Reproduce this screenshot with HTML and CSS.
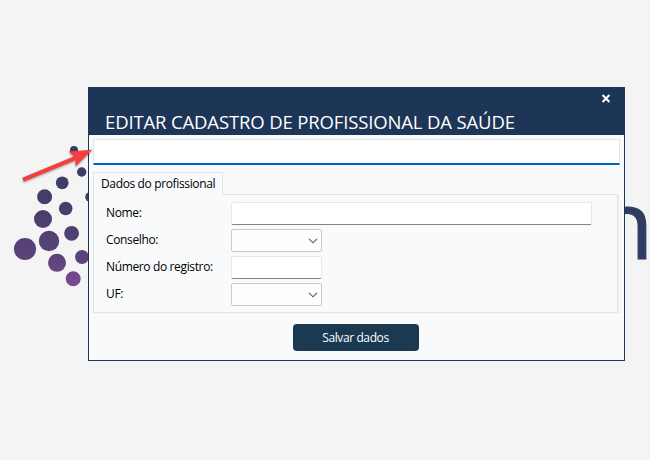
FILE: index.html
```html
<!DOCTYPE html>
<html lang="pt-BR">
<head>
<meta charset="utf-8">
<title>Editar cadastro</title>
<link rel="stylesheet" href="styles.css">
</head>
<body>
<svg class="backdrop" width="650" height="460" viewBox="0 0 650 460" aria-hidden="true">
  <defs>
    <linearGradient id="dots" gradientUnits="userSpaceOnUse" x1="0" y1="145" x2="0" y2="287">
      <stop offset="0" stop-color="#323f63"/>
      <stop offset=".45" stop-color="#463e6b"/>
      <stop offset=".8" stop-color="#5c437a"/>
      <stop offset="1" stop-color="#7c4b92"/>
    </linearGradient>
  </defs>
  <g fill="url(#dots)">
    <circle cx="74" cy="150" r="4"/>
    <circle cx="81.7" cy="172" r="4.7"/>
    <circle cx="62.2" cy="182.8" r="6.4"/>
    <circle cx="44.6" cy="196.7" r="7.5"/>
    <circle cx="90" cy="197" r="4.8"/>
    <circle cx="65.7" cy="208.5" r="6.8"/>
    <circle cx="43" cy="219" r="9"/>
    <circle cx="71.6" cy="233.3" r="7.4"/>
    <circle cx="49" cy="241" r="10.2"/>
    <circle cx="25" cy="249" r="11.1"/>
    <circle cx="82" cy="257" r="6.9"/>
    <circle cx="57" cy="262.8" r="9"/>
    <circle cx="73.2" cy="278.7" r="7.5"/>
  </g>
  <text class="wordmark" x="595.2" y="258.5">n</text>
</svg>

<main class="dialog">
  <header class="titlebar">
    <svg class="close" width="10" height="10" viewBox="0 0 10 10"><path d="M1.2 1.2L8.8 8.8M8.8 1.2L1.2 8.8"/></svg>
    <h1 class="title">EDITAR CADASTRO DE PROFISSIONAL DA SAÚDE</h1>
  </header>
  <div class="content">
    <div class="search"></div>
    <div class="tab">Dados do profissional</div>
    <section class="panel">
      <span class="label">Nome:</span><div class="input wide"></div>
      <span class="label">Conselho:</span><div class="select"><svg width="10" height="6" viewBox="0 0 10 6"><path d="M1 .8L5 4.8L9 .8"/></svg></div>
      <span class="label">Número do registro:</span><div class="input"></div>
      <span class="label">UF:</span><div class="select"><svg width="10" height="6" viewBox="0 0 10 6"><path d="M1 .8L5 4.8L9 .8"/></svg></div>
    </section>
    <button class="save">Salvar dados</button>
  </div>
</main>

<svg class="pointer" width="100" height="190" viewBox="0 0 100 190" aria-hidden="true">
  <path d="M92.3 149.7L68.5 151.6L73.7 156.6L22.3 177.8L23.8 181.7L75.4 160.3L75.6 166.6Z"/>
</svg>
</body>
</html>
```
FILE: styles.css
```css
* { box-sizing: border-box; }

body {
  margin: 0;
  width: 650px;
  height: 460px;
  padding: 87px 25px 0 88px;
  overflow: hidden;
  background: #f4f4f4;
  color: #000;
  font: 12px/16px "Open Sans", "Noto Sans", sans-serif;
}

.backdrop, .pointer { position: absolute; left: 0; top: 0; }
.wordmark {
  font: 95px "Open Sans", sans-serif;
  fill: #2f3b5f;
  stroke: #2f3b5f;
  stroke-width: 1.2px;
}
.pointer { fill: #f43f3f; filter: drop-shadow(0 1px 1px rgba(0, 0, 0, .35)); }

.dialog {
  position: relative;
  width: 537px;
  height: 274px;
  border: 1px solid #1d3557;
  background: #f8fafc;
}

.titlebar {
  display: flex;
  flex-direction: column;
  height: 47px;
  padding: 6px 13px 0 16px;
  background: #1d3557;
}

.close {
  align-self: flex-end;
  fill: none;
  stroke: #fff;
  stroke-width: 2.3;
}

.title {
  margin: 6px 0 0;
  color: #fff;
  font-size: 18.5px;
  font-weight: 400;
  line-height: 26px;
  letter-spacing: -.14px;
  white-space: nowrap;
}

.content { display: flex; flex-direction: column; padding: 4px 4px 0; }

.search {
  height: 26px;
  border: 1px solid #e3e6e9;
  border-bottom: 2px solid #0063b8;
  background: #fff;
}

.tab {
  z-index: 1;
  width: 130px;
  height: 23px;
  margin-top: 7px;
  padding: 3px 0 0 7px;
  border: 1px solid #e3e3e3;
  border-bottom: 0;
  background: #f9fafb;
  letter-spacing: -.36px;
  white-space: nowrap;
}

.panel {
  display: grid;
  grid-template-columns: 125px 1fr;
  grid-auto-rows: 23px;
  row-gap: 4px;
  width: 525px;
  height: 119px;
  margin-top: -1px;
  padding: 7px 0 0 12px;
  border: 1px solid #e3e3e3;
  background: #f9fafb;
  box-shadow: 2px 1px 0 #f2f3f4;
}

.label { padding-top: 3px; letter-spacing: -.36px; white-space: nowrap; }

.input {
  width: 91px;
  border: 1px solid #e7e8e9;
  border-bottom-color: #858585;
  border-radius: 2px;
  background: #fff;
}
.input.wide { width: 361px; }

.select {
  display: flex;
  align-items: center;
  justify-content: flex-end;
  width: 91px;
  padding: 1px 3px 0 0;
  border: 1px solid #c8c9ca;
  border-radius: 2px;
  background: #fdfdfd;
}
.select svg { fill: none; stroke: #5c5c5c; stroke-width: 1.1; }

.save {
  align-self: center;
  width: 126px;
  height: 27px;
  margin: 11px 2px 0 0;
  padding: 1px 0 0;
  border: 0;
  border-radius: 4px;
  background: #1b3a52;
  color: #fff;
  font: inherit;
  letter-spacing: -.4px;
}
```
